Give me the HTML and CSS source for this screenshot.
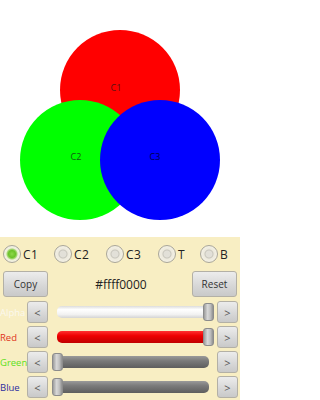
FILE: index.html
```html
<!DOCTYPE html>
<html>
<head>
<meta charset="utf-8">
<link rel="stylesheet" href="styles.css">
</head>
<body>
<div class="canvas">
  <div class="circle red"><span>C1</span></div>
  <div class="circle green"><span>C2</span></div>
  <div class="circle blue"><span>C3</span></div>
</div>
<div class="panel">
  <div class="radios">
    <label class="radio on"><span class="dot"></span>C1</label>
    <label class="radio"><span class="dot"></span>C2</label>
    <label class="radio"><span class="dot"></span>C3</label>
    <label class="radio"><span class="dot"></span>T</label>
    <label class="radio"><span class="dot"></span>B</label>
  </div>
  <div class="actions">
    <button class="btn big">Copy</button>
    <div class="hex">#ffff0000</div>
    <button class="btn big">Reset</button>
  </div>
  <div class="sliders">
    <div class="srow">
      <span class="lbl alpha">Alpha</span>
      <button class="btn small">&lt;</button>
      <div class="track"><div class="bar white"></div><div class="thumb right"></div></div>
      <button class="btn small">&gt;</button>
    </div>
    <div class="srow">
      <span class="lbl r">Red</span>
      <button class="btn small">&lt;</button>
      <div class="track"><div class="bar redbar"></div><div class="thumb right"></div></div>
      <button class="btn small">&gt;</button>
    </div>
    <div class="srow">
      <span class="lbl g">Green</span>
      <button class="btn small">&lt;</button>
      <div class="track"><div class="bar gray"></div><div class="thumb left"></div></div>
      <button class="btn small">&gt;</button>
    </div>
    <div class="srow">
      <span class="lbl b">Blue</span>
      <button class="btn small">&lt;</button>
      <div class="track"><div class="bar gray"></div><div class="thumb left"></div></div>
      <button class="btn small">&gt;</button>
    </div>
  </div>
</div>
</body>
</html>
```
FILE: styles.css
```css
* { box-sizing: border-box; }
html, body { margin: 0; padding: 0; }
body {
  width: 240px;
  height: 400px;
  overflow: hidden;
  background: #fff;
  font-family: "Open Sans", "DejaVu Sans", sans-serif;
}
.canvas {
  position: relative;
  height: 237px;
  background: #fff;
}
.circle {
  position: absolute;
  width: 120px;
  height: 120px;
  border-radius: 50%;
  display: flex;
  align-items: center;
  justify-content: center;
}
.circle span {
  font-size: 9px;
  color: #1a1a1a;
  opacity: 0.75;
}
.red { background: #ff0000; left: 60px; top: 30px; }
.red span { margin: -6px 8px 0 0; }
.green { background: #00ff00; left: 20px; top: 100px; }
.green span { margin: -8px 8px 0 0; }
.blue { background: #0000ff; left: 100px; top: 100px; }
.blue span { margin: -8px 10px 0 0; color: #000; }

.panel {
  height: 163px;
  background: #f8eec3;
  padding-top: 8px;
}
.radios {
  display: grid;
  grid-template-columns: 51px 52px 52px 42px 1fr;
  padding-left: 3px;
  height: 18px;
}
.radio {
  display: flex;
  align-items: center;
  gap: 2px;
  font-size: 12px;
  color: #222;
  letter-spacing: 0.5px;
}
.dot {
  width: 18px;
  height: 18px;
  border-radius: 50%;
  border: 1px solid #a9a69a;
  background: radial-gradient(circle, #e2e0d8 0, #e2e0d8 3px, #c8c6bc 4px, #ece9dd 5px, #f3f0e4 8px);
  display: flex;
  align-items: center;
  justify-content: center;
}
.radio.on .dot {
  background: radial-gradient(circle, #8ed84a 0, #6cc22a 3.5px, #a8d878 5px, #eef0d8 6px, #f3f0e4 8px);
}

.actions {
  display: flex;
  align-items: center;
  justify-content: space-between;
  padding: 0 3px 0 3px;
  margin-top: 8px;
  height: 26px;
}
.btn {
  font-family: "Open Sans", "DejaVu Sans", sans-serif;
  color: #333;
  background: linear-gradient(#ececec, #d6d6d6 60%, #c9c9c9);
  border: 1px solid #b3b0a6;
  border-radius: 3px;
  padding: 0;
  display: flex;
  align-items: center;
  justify-content: center;
}
.btn.big {
  width: 45px;
  height: 26px;
  font-size: 10px;
}
.hex {
  font-size: 12px;
  color: #222;
  margin-left: 2px;
}

.sliders {
  margin-top: 4px;
  display: flex;
  flex-direction: column;
  gap: 3px;
}
.srow {
  display: grid;
  grid-template-columns: 27px 21px 1fr 21px;
  align-items: center;
  height: 22px;
  padding-right: 2px;
}
.lbl {
  font-size: 9.5px;
  white-space: nowrap;
  overflow: hidden;
}
.alpha { color: #fbf8ee; }
.r { color: #e0341c; }
.g { color: #5ee021; }
.b { color: #2c2ca0; }
.btn.small {
  width: 21px;
  height: 22px;
  font-size: 11px;
  color: #555;
}
.track {
  position: relative;
  height: 22px;
  margin: 0 3px 0 4px;
}
.bar {
  position: absolute;
  left: 5px;
  right: 5px;
  top: 5px;
  height: 12px;
  border-radius: 5px;
}
.bar.white {
  background: linear-gradient(#dcdcdc, #ffffff 30%, #f2f2f2 70%, #d4d4d4);
}
.bar.redbar {
  background: linear-gradient(#ff3030, #ee0000 40%, #c00000);
}
.bar.gray {
  background: linear-gradient(#9a9a9a, #7a7a7a 40%, #5e5e5e);
}
.thumb {
  position: absolute;
  top: 2px;
  width: 11px;
  height: 18px;
  border-radius: 3px;
  border: 1px solid #8c8c8c;
  background: linear-gradient(90deg, #9c9c9c, #d8d8d8 40%, #c0c0c0 70%, #8f8f8f);
}
.thumb.right { right: 0; }
.thumb.left { left: 0; }
```
